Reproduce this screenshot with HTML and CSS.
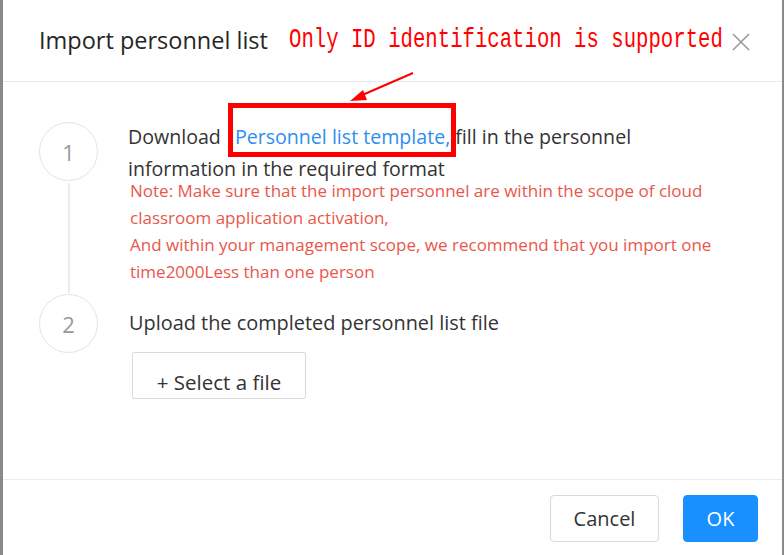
FILE: index.html
```html
<html>
<head>
<meta charset="utf-8" />
<title>Import personnel list</title>
<link rel="stylesheet" href="styles.css">
</head>
<body>
<div class="modal">
	<div class="modal-header">
		<h2 class="modal-title">Import personnel list</h2>
		<button class="close-btn"><svg width="18" height="18" viewBox="0 0 18 18">
			<line x1="1" y1="1" x2="17" y2="17" style="stroke:#999;stroke-width:1.6"/>
			<line x1="17" y1="1" x2="1" y2="17" style="stroke:#999;stroke-width:1.6"/>
		</svg></button>
	</div>
	<div class="modal-body">
		<div class="step step-first">
			<div class="step-rail">
				<div class="step-num">1</div>
				<div class="step-line"></div>
			</div>
			<div class="step-content">
				<p class="step-text">Download <a class="link">Personnel list template,</a> fill in the personnel information in the required format</p>
				<p class="note">Note: Make sure that the import personnel are within the scope of cloud classroom application activation,<br>And within your management scope, we recommend that you import one time2000Less than one person</p>
			</div>
		</div>
		<div class="step">
			<div class="step-rail">
				<div class="step-num">2</div>
			</div>
			<div class="step-content">
				<p class="step-text step-text-2">Upload the completed personnel list file</p>
				<button class="btn select-btn">+ Select a file</button>
			</div>
		</div>
	</div>
	<div class="modal-footer">
		<button class="btn cancel-btn">Cancel</button>
		<button class="btn ok-btn">OK</button>
	</div>

	<!-- annotation drawn on top of the screenshot -->
	<div class="mark-text">Only ID identification is supported</div>
	<div class="mark-box"></div>
	<svg class="mark-arrow" width="90" height="50" viewBox="0 0 90 50">
		<line x1="83" y1="3" x2="30" y2="26" style="stroke:#f00;stroke-width:2"/>
		<polygon points="20,31 33,20 37,30" style="fill:#f00"/>
	</svg>
</div>
</body>
</html>
```

FILE: styles.css
```css
body {
	margin: 0;
	background-color: #8a8a8a;
	font-family: "Open Sans", "Noto Sans", sans-serif;
	color: #333;
}

.modal {
	position: relative;
	margin-left: 3px;
	width: 779px;
	height: 555px;
	background-color: #fff;
	display: flex;
	flex-direction: column;
	overflow: hidden;
}

.modal-header {
	height: 82px;
	border-bottom: 1px solid #e9e9e9;
	display: flex;
	align-items: center;
	justify-content: space-between;
	padding: 0 32px 0 36px;
	box-sizing: border-box;
}

.modal-title {
	margin: 0;
	font-size: 23.5px;
	font-weight: normal;
	color: #262626;
	padding-bottom: 2px;
}

.close-btn {
	border: none;
	background: none;
	padding: 0;
	margin-top: 3px;
	width: 18px;
	height: 18px;
}

.modal-body {
	flex: 1;
	padding: 39px 0 0 36px;
}

.step {
	display: flex;
	gap: 30px;
}

.step-first {
	height: 172px;
}

.step-rail {
	width: 59px;
	display: flex;
	flex-direction: column;
	align-items: center;
	padding-top: 1px;
}

.step-num {
	width: 59px;
	height: 59px;
	box-sizing: border-box;
	border: 1px solid #e3e3e3;
	border-radius: 50%;
	display: flex;
	align-items: center;
	justify-content: center;
	font-size: 22px;
	color: #999;
	flex-shrink: 0;
}

.step-line {
	flex: 1;
	width: 2px;
	background-color: #ececec;
	margin: 2px 0 0 1px;
}

.step-content {
	flex: 1;
}

.step-text {
	margin: 0;
	font-size: 19.6px;
	line-height: 32px;
	color: #333;
	width: 540px;
}

.link {
	color: #2d8ff0;
	margin-left: 9px;
}

.note {
	margin: -8px 0 0 2px;
	font-size: 17px;
	line-height: 27px;
	color: #e9574b;
	width: 610px;
}

.step-text-2 {
	margin-top: 20px;
	font-size: 19.9px;
	line-height: 20px;
	margin-left: 1px;
}

.btn {
	font-family: "Open Sans", "Noto Sans", sans-serif;
	background-color: #fff;
	border: 1px solid #d9d9d9;
	border-radius: 4px;
	color: #333;
	cursor: pointer;
	height: 47px;
	padding: 0;
}

.select-btn {
	margin: 19px 0 0 4px;
	width: 174px;
	font-size: 20.5px;
	padding-top: 13px;
	border-radius: 2px;
}

.modal-footer {
	height: 76px;
	border-top: 1px solid #ececec;
	display: flex;
	justify-content: flex-end;
	align-items: flex-start;
	gap: 24px;
	padding: 15px 24px 0 0;
	box-sizing: border-box;
}

.cancel-btn {
	width: 109px;
	font-size: 20px;
}

.ok-btn {
	width: 75px;
	font-size: 20px;
	background-color: #1890ff;
	border-color: #1890ff;
	color: #fff;
}

.mark-text {
	position: absolute;
	left: 286px;
	top: 25px;
	font-family: "Liberation Mono", monospace;
	font-size: 27px;
	color: #f00;
	white-space: nowrap;
	transform: scaleX(0.765);
	transform-origin: left top;
}

.mark-box {
	position: absolute;
	left: 225px;
	top: 103px;
	width: 218px;
	height: 44px;
	border: 5px solid #f00;
}

.mark-arrow {
	position: absolute;
	left: 327px;
	top: 70px;
}
```
